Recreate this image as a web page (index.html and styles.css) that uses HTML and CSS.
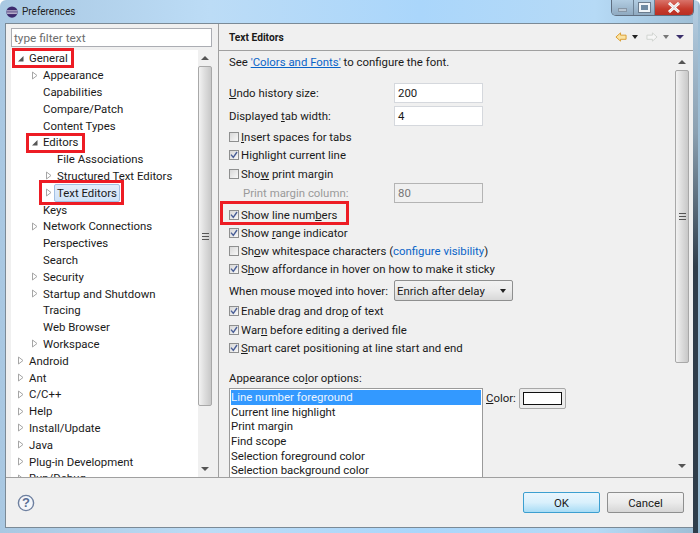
FILE: index.html
```html
<!DOCTYPE html>
<html lang="en">
<head>
<meta charset="utf-8">
<title>Preferences</title>
<link rel="stylesheet" href="styles.css">
</head>
<body>
<svg class="defs" width="0" height="0" aria-hidden="true">
  <symbol id="check" viewBox="0 0 10 10"><path d="M2 4.6 L4.3 7.4 L8 2" fill="none" stroke="#4a5f97" stroke-width="1.4"/></symbol>
  <symbol id="open" viewBox="0 0 9 9"><path d="M7.5 2 V7.5 H2 Z" fill="#555"/></symbol>
  <symbol id="closed" viewBox="0 0 9 9"><path d="M2.5 1 L7 4.5 L2.5 8 Z" fill="#fff" stroke="#a6a6a6"/></symbol>
</svg>
<div class="window">
  <header class="titlebar">
    <svg class="appicon" width="12" height="12" viewBox="0 0 16 16"><circle cx="8" cy="8" r="7.5" fill="#3c2a6e"/><path d="M1 6.3h14M1 8.2h14M1.4 10.1h13.2" stroke="#e8e4f2" stroke-width="1"/></svg>
    <span class="title">Preferences</span>
    <div class="controls">
      <span class="ctl ctl-min"><i></i></span>
      <span class="ctl ctl-max"><i></i></span>
      <span class="ctl ctl-close">
        <svg width="16" height="11" viewBox="0 0 16 11"><path d="M3 1 L13 10 M13 1 L3 10" stroke="#fff" stroke-width="3"/><path d="M3 1 L13 10 M13 1 L3 10" stroke="#5a5a66" stroke-width="0.5" opacity=".5"/></svg>
      </span>
    </div>
  </header>
  <div class="client">
    <div class="main">
      <aside class="left">
        <div class="filter">type filter text</div>
        <div class="treewrap">
          <div class="tree">
            <div class="row l0"><svg class="tw"><use href="#open"/></svg><span>General</span></div>
            <div class="row l1"><svg class="tw"><use href="#closed"/></svg><span>Appearance</span></div>
            <div class="row l1"><i class="tw"></i><span>Capabilities</span></div>
            <div class="row l1"><i class="tw"></i><span>Compare/Patch</span></div>
            <div class="row l1"><i class="tw"></i><span>Content Types</span></div>
            <div class="row l1"><svg class="tw"><use href="#open"/></svg><span>Editors</span></div>
            <div class="row l2"><i class="tw"></i><span>File Associations</span></div>
            <div class="row l2"><svg class="tw"><use href="#closed"/></svg><span>Structured Text Editors</span></div>
            <div class="row l2"><svg class="tw"><use href="#closed"/></svg><span class="sel">Text Editors</span></div>
            <div class="row l1"><i class="tw"></i><span>Keys</span></div>
            <div class="row l1"><svg class="tw"><use href="#closed"/></svg><span>Network Connections</span></div>
            <div class="row l1"><i class="tw"></i><span>Perspectives</span></div>
            <div class="row l1"><i class="tw"></i><span>Search</span></div>
            <div class="row l1"><svg class="tw"><use href="#closed"/></svg><span>Security</span></div>
            <div class="row l1"><svg class="tw"><use href="#closed"/></svg><span>Startup and Shutdown</span></div>
            <div class="row l1"><i class="tw"></i><span>Tracing</span></div>
            <div class="row l1"><i class="tw"></i><span>Web Browser</span></div>
            <div class="row l1"><svg class="tw"><use href="#closed"/></svg><span>Workspace</span></div>
            <div class="row l0"><svg class="tw"><use href="#closed"/></svg><span>Android</span></div>
            <div class="row l0"><svg class="tw"><use href="#closed"/></svg><span>Ant</span></div>
            <div class="row l0"><svg class="tw"><use href="#closed"/></svg><span>C/C++</span></div>
            <div class="row l0"><svg class="tw"><use href="#closed"/></svg><span>Help</span></div>
            <div class="row l0"><svg class="tw"><use href="#closed"/></svg><span>Install/Update</span></div>
            <div class="row l0"><svg class="tw"><use href="#closed"/></svg><span>Java</span></div>
            <div class="row l0"><svg class="tw"><use href="#closed"/></svg><span>Plug-in Development</span></div>
            <div class="row l0"><svg class="tw"><use href="#closed"/></svg><span>Run/Debug</span></div>
          </div>
          <div class="sbar sbar-tree">
            <div class="arrow up"></div>
            <div class="thumb"><b></b></div>
            <div class="arrow down"></div>
          </div>
        </div>
      </aside>
      <section class="right">
        <div class="pagehead">
          <h1>Text Editors</h1>
          <div class="nav">
            <svg width="12" height="12" viewBox="0 0 13 12"><path d="M1 6 L6 1.5 V4 H12 V8.5 H6 V10.5 Z" fill="#fbe3a2" stroke="#d99a2b"/></svg>
            <i class="dd dark"></i>
            <svg class="fwd" width="12" height="12" viewBox="0 0 13 12"><path d="M12 6 L7 1.5 V4 H1 V8.5 H7 V10.5 Z" fill="#f6f6f6" stroke="#cfd3cf"/></svg>
            <i class="dd grey"></i>
            <i class="dd purple"></i>
          </div>
        </div>
        <div class="pagebody">
          <div class="form">
            <p class="see">See <a>'Colors and Fonts'</a> to configure the font.</p>
            <div class="field f-undo"><label><u>U</u>ndo history size:</label><span class="input">200</span></div>
            <div class="field f-tab"><label>Displayed <u>t</u>ab width:</label><span class="input">4</span></div>
            <div class="cbrow"><span class="cb"></span><span><u>I</u>nsert spaces for tabs</span></div>
            <div class="cbrow"><span class="cb"><svg><use href="#check"/></svg></span><span>Highlight current line</span></div>
            <div class="cbrow"><span class="cb"></span><span>Sho<u>w</u> print margin</span></div>
            <div class="field f-margin"><label>Print margin column:</label><span class="input off">80</span></div>
            <div class="cbrow"><span class="cb"><svg><use href="#check"/></svg></span><span>Show line num<u>b</u>ers</span></div>
            <div class="cbrow"><span class="cb"><svg><use href="#check"/></svg></span><span>Show <u>r</u>ange indicator</span></div>
            <div class="cbrow"><span class="cb"></span><span>Sh<u>o</u>w whitespace characters (<a>configure visibility</a>)</span></div>
            <div class="cbrow"><span class="cb"><svg><use href="#check"/></svg></span><span>S<u>h</u>ow affordance in hover on how to make it sticky</span></div>
            <div class="field f-hover"><label>When mouse mo<u>v</u>ed into hover:</label><span class="combo">Enrich after delay<i class="dd dark"></i></span></div>
            <div class="cbrow"><span class="cb"><svg><use href="#check"/></svg></span><span>Enable drag and dro<u>p</u> of text</span></div>
            <div class="cbrow"><span class="cb"><svg><use href="#check"/></svg></span><span>War<u>n</u> before editing a derived file</span></div>
            <div class="cbrow"><span class="cb"><svg><use href="#check"/></svg></span><span><u>S</u>mart caret positioning at line start and end</span></div>
            <p class="colorhead">Appearance co<u>l</u>or options:</p>
            <div class="colors">
              <ul class="list">
                <li class="on">Line number foreground</li>
                <li>Current line highlight</li>
                <li>Print margin</li>
                <li>Find scope</li>
                <li>Selection foreground color</li>
                <li>Selection background color</li>
              </ul>
              <div class="colorpick"><span><u>C</u>olor:</span><span class="swatch"><i></i></span></div>
            </div>
          </div>
          <div class="sbar sbar-page">
            <div class="arrow up"></div>
            <div class="thumb"><b></b></div>
            <div class="arrow down"></div>
          </div>
        </div>
      </section>
    </div>
    <footer class="footer">
      <svg class="help" width="18" height="18" viewBox="0 0 18 18"><circle cx="9" cy="9" r="7.6" fill="#f4f6fa" stroke="#6d7f9f" stroke-width="1.4"/><text x="9" y="13.2" text-anchor="middle" class="helpq">?</text></svg>
      <div class="buttons">
        <span class="btn primary">OK</span>
        <span class="btn">Cancel</span>
      </div>
    </footer>
  </div>
  <div class="mark m-general"></div>
  <div class="mark m-editors"></div>
  <div class="mark m-text"></div>
  <div class="mark m-line"></div>
</div>
</body>
</html>
```
FILE: styles.css
```css
* { box-sizing: border-box; }
html, body { margin: 0; padding: 0; }
body { font-family: Roboto, "Noto Sans", sans-serif; font-size: 11.4px; color: #1a1a1a; }
.defs { position: absolute; }
p, h1, ul { margin: 0; padding: 0; }
u { text-underline-offset: 1px; }
i { display: block; }

.window {
  position: relative; width: 700px; height: 533px; overflow: hidden;
  display: flex; flex-direction: column;
  background:
    linear-gradient(#b5cfe4 0, #8a9fb0 25%, #2f3d4a 50%, #2f3d4a 100%) no-repeat right 2px top / 5px 100%,
    linear-gradient(90deg, #a9c8e2 0, #bcdcf6 30%, #aad6fb 60%, #b6daf6 85%, #9dbdd4 100%);
  border-radius: 6px 6px 0 0;
}
.titlebar { height: 23px; flex: none; display: flex; align-items: center; padding: 0 6px 0 6px; position: relative; }
.appicon { margin-right: 4px; margin-top: 0; }
.title { color: #222; font-size: 10px; }
.controls { margin-left: auto; align-self: flex-start; display: flex; height: 16px; border: 1px solid #5f6e80; border-top: 0; border-radius: 0 0 5px 5px; overflow: hidden; }
.ctl { display: flex; align-items: center; justify-content: center; }
.ctl-min { width: 22px; background: linear-gradient(#b2cde2, #8fa9c0); border-right: 1px solid #6d8296; }
.ctl-min i { width: 9px; height: 4px; margin-top: 4px; background: #b9c6d3; border: 1px solid #8796a6; }
.ctl-max { width: 21px; background: linear-gradient(#b2cde2, #8fa9c0); border-right: 1px solid #6d8296; }
.ctl-max i { width: 11px; height: 9px; border: 2px solid #f0f4f8; background: #6e8aa3; outline: 1px solid #6b7c8e; }
.ctl-close { width: 38px; background: linear-gradient(#d9736a 0, #c63a2c 60%, #b92f24 100%); }

.client { flex: 1; min-height: 0; margin: 0 7px 5px 5px; background: #f0f0f0; border: 1px solid #7b8a96; border-right: 0; display: flex; flex-direction: column; }
.main { height: 454px; flex: none; display: flex; border-bottom: 1px solid #a0a0a0; }

.left { width: 213px; flex: none; border-right: 1px solid #a0a0a0; padding: 4px 6px 0 5px; display: flex; flex-direction: column; }
.filter { height: 19px; flex: none; border: 1px solid #abadb3; background: #fff; color: #6d6d6d; font-size: 11.8px; line-height: 18px; padding-left: 2px; margin-bottom: 3px; }
.treewrap { flex: 1; min-height: 0; display: flex; background: #fff; overflow: hidden; }
.tree { flex: 1; min-width: 0; overflow: hidden; }
.row { height: 16.8px; display: flex; align-items: center; white-space: nowrap; }
.l0 { padding-left: 5px; }
.l1 { padding-left: 19px; }
.l2 { padding-left: 33px; }
.tw { width: 9px; height: 9px; flex: none; margin-right: 4px; }
.sel { margin-left: -3px; padding: 0 2px; height: 18px; line-height: 16px; border: 1px solid #a3c0e3; border-radius: 2px; background: linear-gradient(#e3eefb, #cfe2f8); }

.sbar { flex: none; background: #f0f0f0; display: flex; flex-direction: column; }
.sbar-tree { width: 14px; }
.sbar-page { width: 14px; margin: 3px 4px 3px 0; }
.arrow { height: 16px; flex: none; display: flex; align-items: center; justify-content: center; }
.arrow::after { content: ""; border-left: 4px solid transparent; border-right: 4px solid transparent; }
.arrow.up::after { border-bottom: 4px solid #555; }
.arrow.down::after { border-top: 4px solid #555; }
.sbar .thumb { display: flex; align-items: center; justify-content: center; border: 1px solid #a8a8a8; border-radius: 2px; background: linear-gradient(90deg, #f2f2f2, #dcdcdc 50%, #c8c8c8); }
.sbar-tree .thumb { height: 340px; }
.sbar-tree .arrow.down { margin-top: auto; }
.sbar-page .thumb { height: 293px; }
.sbar-page .arrow.down { margin-top: auto; }
.thumb b { display: block; width: 7px; height: 7px; background: repeating-linear-gradient(#555 0 1px, transparent 1px 3px); }

.right { flex: 1; min-width: 0; display: flex; flex-direction: column; }
.pagehead { height: 27px; flex: none; border-bottom: 1px solid #a0a0a0; display: flex; align-items: center; padding-left: 10px; padding-right: 9px; }
.pagehead h1 { font-size: 10.2px; font-weight: 700; }
.nav { margin-left: auto; display: flex; align-items: center; }
.nav .dd { margin: 0 8px 0 5px; }
.nav .dd.grey { margin-right: 7px; }
.nav .dd.purple { margin: 0; border-top-color: #3a2f6b; border-left-width: 4px; border-right-width: 4px; }
.dd { width: 0; height: 0; border-left: 3.5px solid transparent; border-right: 3.5px solid transparent; border-top: 4px solid #222; }
.dd.grey { border-top-color: #777; }

.pagebody { flex: 1; min-height: 0; display: flex; }
.form { flex: 1; min-width: 0; overflow: hidden; padding: 3px 0 0 10px; }
.see { height: 17px; line-height: 17px; margin-bottom: 12px; }
a { color: #0a64c8; }
.see a { text-decoration: underline; text-underline-offset: 1px; }
.field { display: flex; align-items: center; white-space: nowrap; }
.field label { width: 165px; flex: none; }
.input { width: 89px; height: 20px; border: 1px solid #d5d8dd; background: #fff; padding-left: 3px; line-height: 18px; }
.input.off { background: #f0f0f0; border-color: #b4b4b4; color: #777; }
.f-undo { height: 20px; margin-bottom: 3px; }
.f-tab { height: 20px; margin-bottom: 2px; }
.f-margin { height: 20px; margin-bottom: 2.5px; padding-left: 14px; color: #9a9a9a; }
.f-margin label { width: 151px; }
.cbrow { height: 18.3px; display: flex; align-items: center; white-space: nowrap; }
.cb { width: 10px; height: 10px; flex: none; margin-right: 2px; border: 1px solid #8e8f8f; background: linear-gradient(135deg, #d8d8d8, #f8f8f8); position: relative; }
.cb svg { position: absolute; left: -1px; top: -1px; width: 10px; height: 10px; }
.f-hover { height: 22px; margin: 1px 0 0.5px; }
.combo { width: 119px; height: 21px; border: 1px solid #8e8f8f; border-radius: 2px; background: linear-gradient(#f2f2f2 0, #ebebeb 50%, #d8d8d8 100%); display: flex; align-items: center; justify-content: space-between; padding: 0 6px 0 2px; }
.colorhead { height: 17px; line-height: 17px; margin-top: 13px; margin-bottom: 1px; }
.colors { display: flex; align-items: flex-start; }
.list { list-style: none; width: 254px; height: 110px; border: 1px solid #9a9a9a; background: #fff; padding: 1px 1px 0; flex: none; }
.list li { height: 14.7px; line-height: 14.7px; padding-left: 0; white-space: nowrap; }
.list li.on { background: #3399ff; color: #eaf4ff; }
.colorpick { display: flex; align-items: center; margin: 0 0 0 3px; }
.swatch { width: 47px; height: 21px; margin-left: 3px; border: 1px solid #a8a8a8; border-radius: 2px; background: #ececec; padding: 3px; display: block; }
.swatch i { height: 100%; background: #fff; border: 1px solid #111; }

.footer { flex: 1; min-height: 0; display: flex; align-items: center; padding: 0 9px 0 11px; justify-content: space-between; }
.helpq { font-family: "Liberation Sans", sans-serif; font-size: 13px; font-weight: 700; fill: #5a6f94; }
.buttons { display: flex; gap: 7px; }
.btn { width: 77px; height: 21px; display: flex; align-items: center; justify-content: center; border: 1px solid #8e8f8f; border-radius: 2px; background: linear-gradient(#f4f4f4 0, #ebebeb 50%, #d6d6d6 100%); }
.btn.primary { border-color: #3c9fd0; background: linear-gradient(#eaf6fd 0, #d9f0fc 50%, #a8dcf5 100%); }

.mark { position: absolute; border: 3px solid #ed1c24; pointer-events: none; }
.m-general { left: 12px; top: 48px; width: 62px; height: 20px; }
.m-editors { left: 26px; top: 133px; width: 59px; height: 20px; }
.m-text { left: 39px; top: 180px; width: 85px; height: 25px; }
.m-line { left: 220px; top: 201px; width: 129px; height: 24px; }
```
